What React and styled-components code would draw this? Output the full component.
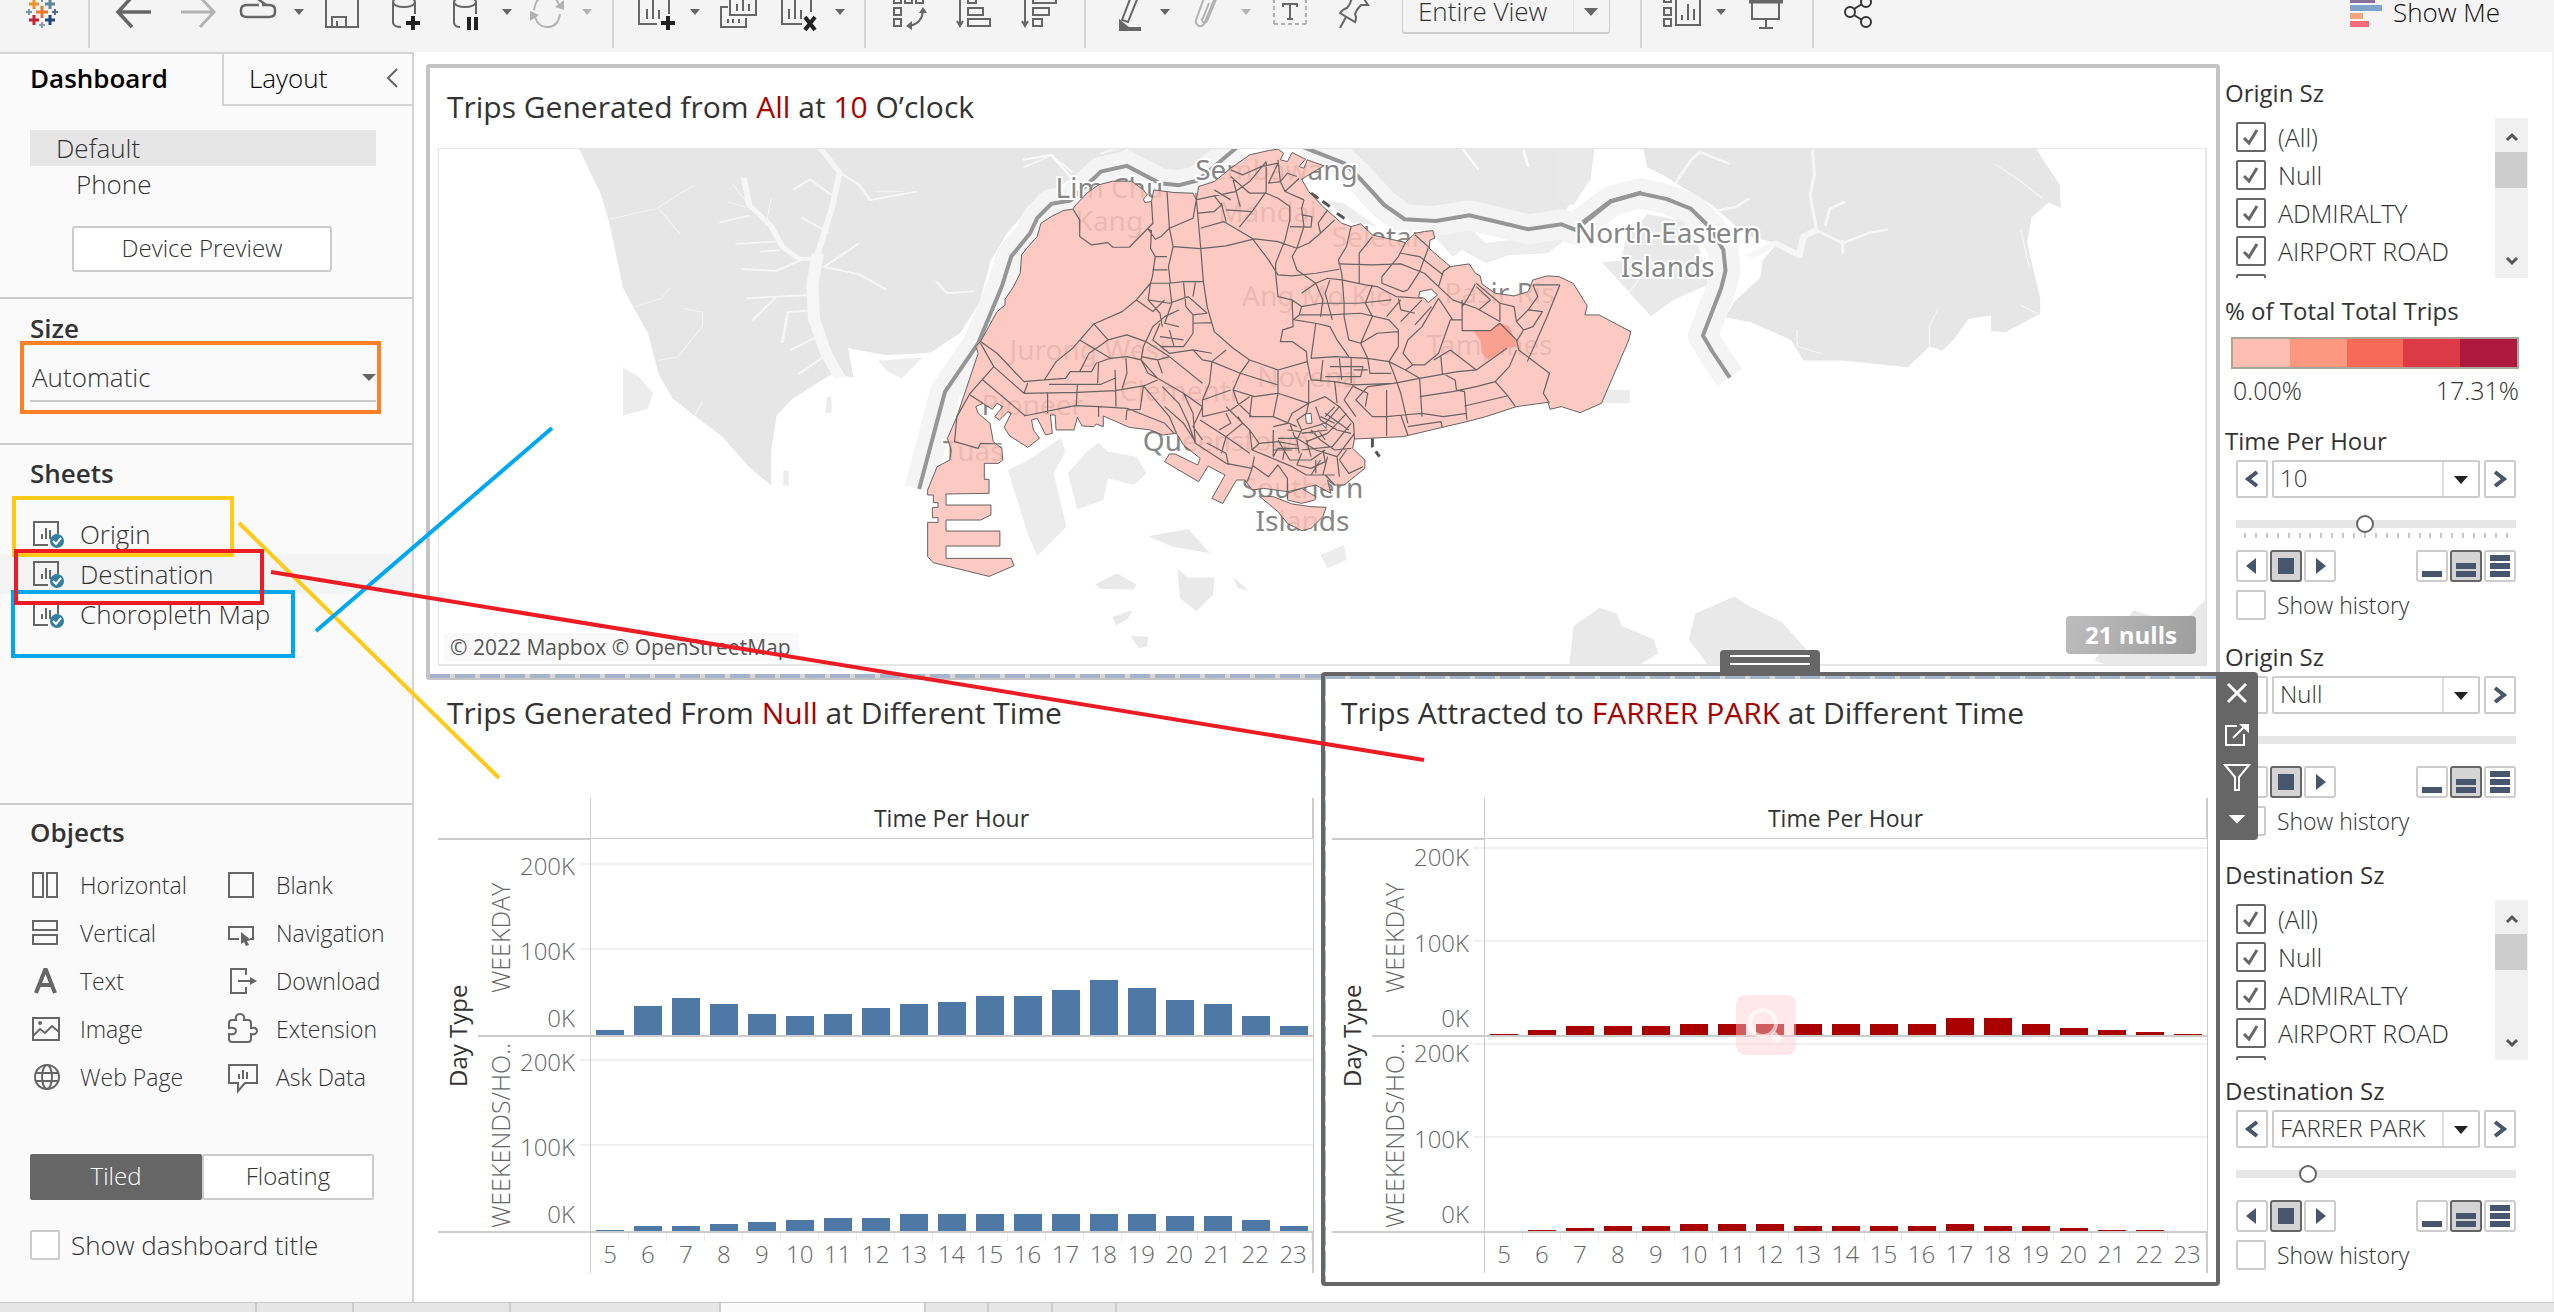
import React, { useState } from 'react';
import styled, { createGlobalStyle, css } from 'styled-components';

const FONT = '"Open Sans", "Noto Sans", sans-serif';
const LINE = '#cccccc';
const INK = '#333333';
const ICON = '#666666';

const Global = createGlobalStyle`
  *, *::before, *::after { box-sizing: border-box; }
  body { margin: 0; background: #fff; color: ${INK}; font: 300 24px/30px ${FONT}; }
  button, select, input { font: inherit; color: inherit; margin: 0; padding: 0; }
  button { cursor: pointer; background: none; border: 0; }
  h2, h3, p, ul { margin: 0; padding: 0; font-weight: inherit; font-size: inherit; }
  ul { list-style: none; }
`;

const Page = styled.div`
  position: relative;
  display: flex;
  flex-direction: column;
  min-height: 100vh;
  background: #f4f4f4;
  overflow: hidden;
`;

/* ---------- toolbar ---------- */

const Toolbar = styled.header`
  height: 52px;
  overflow: hidden;
`;

const ToolRow = styled.div`
  display: flex;
  align-items: center;
  height: 80px;
  margin-top: -28px;
  padding-right: 54px;
`;

const Tool = styled.button`
  display: flex;
  justify-content: center;
  align-items: center;
  flex: none;
  width: ${(p) => p.$w || 64}px;
  height: 56px;
  color: ${(p) => (p.$dim ? '#b3b3b3' : ICON)};
  svg { flex: none; width: 40px; height: 40px; overflow: visible; fill: none; stroke: currentColor; stroke-width: 2; }
`;

const CaretTool = styled(Tool)`
  &::after {
    content: '';
    border: 5px solid transparent;
    border-top: 6px solid currentColor;
    border-bottom: 0;
  }
`;

const Divider = styled.span`
  flex: none;
  width: 2px;
  height: 76px;
  margin: 0 12px;
  align-self: flex-start;
  background: #d4d4d4;
`;

const LogoBox = styled.div`
  display: flex;
  justify-content: center;
  flex: none;
  width: 76px;
  padding-left: 8px;
  svg { width: 40px; height: 40px; overflow: visible; }
`;

const FitBox = styled.span`
  position: relative;
  flex: none;
  width: 208px;
  margin: 0 18px 0 20px;
  select {
    appearance: none;
    width: 100%;
    height: 44px;
    padding: 0 0 2px 15px;
    font-size: 26px;
    line-height: 24px;
    border: 1px solid ${LINE};
    border-bottom-width: 2px;
    border-radius: 3px;
    background: #f4f4f4;
  }
  &::before {
    content: '';
    position: absolute;
    right: 36px;
    top: 1px;
    bottom: 2px;
    border-left: 1px solid #e0e0e0;
  }
  &::after {
    content: '';
    position: absolute;
    right: 12px;
    top: 18px;
    border: 7px solid transparent;
    border-top: 8px solid ${ICON};
    border-bottom: 0;
  }
`;

const ShowMe = styled.button`
  display: flex;
  align-items: center;
  gap: 11px;
  margin-left: auto;
  font-size: 26px;
  line-height: 24px;
  color: #111;
  svg { width: 32px; height: 40px; }
`;

/* ---------- side panel ---------- */

const Body = styled.div`
  display: flex;
  flex: 1;
`;

const Side = styled.aside`
  display: flex;
  flex-direction: column;
  flex: none;
  width: 414px;
  background: #fafafa;
  border-top: 2px solid #d4d4d4;
  border-right: 2px solid #d4d4d4;
`;

const Tabs = styled.div`
  display: flex;
  height: 52px;
  color: #000;
`;

const Tab = styled.button`
  text-align: left;
  padding: 0 0 4px 30px;
  width: 222px;
  font-size: 26px;
  font-weight: 600;
  ${(p) => p.$off && css`
    display: flex;
    justify-content: space-between;
    align-items: center;
    flex: 1;
    padding: 0 14px 2px 25px;
    font-weight: 300;
    border-left: 2px solid #d4d4d4;
    border-bottom: 2px solid #d4d4d4;
  `}
`;

const Section = styled.section`
  padding: ${(p) => p.$top || 12}px 36px ${(p) => p.$bottom || 0}px 30px;
  border-bottom: ${(p) => (p.$last ? 0 : 2)}px solid ${LINE};
  ${(p) => p.$grow && 'flex: 1;'}
`;

const Heading = styled.h2`
  height: 36px;
  line-height: 32px;
  font-size: 26px;
  font-weight: 600;
`;

const Device = styled.li`
  height: 36px;
  line-height: 36px;
  font-size: 26px;
  padding-left: ${(p) => (p.$on ? 26 : 46)}px;
  background: ${(p) => (p.$on ? '#e6e6e6' : 'transparent')};
`;

const Preview = styled.button`
  display: block;
  width: 260px;
  height: 46px;
  margin: 24px 0 0 42px;
  padding-bottom: 2px;
  background: #fff;
  border: 2px solid ${LINE};
  border-radius: 3px;
`;

const SizeBox = styled.div`
  position: relative;
  margin-top: 6px;
  select {
    appearance: none;
    width: 100%;
    height: 48px;
    padding-left: 2px;
    font-size: 26px;
    background: none;
    border: 0;
    border-bottom: 2px solid ${LINE};
  }
  &::after {
    content: '';
    position: absolute;
    right: 0;
    top: 20px;
    border: 7px solid transparent;
    border-top: 7px solid ${ICON};
    border-bottom: 0;
  }
`;

const SheetList = styled.ul`
  margin: 21px -36px 0 -30px;
`;

const Sheet = styled.li`
  display: flex;
  align-items: center;
  gap: 14px;
  height: 40px;
  padding-left: 32px;
  font-size: 26px;
  background: ${(p) => (p.$hover ? '#f4f4f4' : 'transparent')};
  svg { width: 34px; height: 28px; }
`;

const ObjectGrid = styled.div`
  display: grid;
  grid-template-columns: 196px 1fr;
  grid-auto-rows: 48px;
  margin: 9px -36px 53px 0;
`;

const ObjectItem = styled.button`
  display: flex;
  align-items: center;
  gap: 16px;
  text-align: left;
  font-size: 23px;
  svg { flex: none; width: 34px; height: 34px; fill: none; stroke: ${ICON}; stroke-width: 2; overflow: visible; }
`;

const Toggle = styled.div`
  display: grid;
  grid-template-columns: 1fr 1fr;
  width: 344px;
  height: 46px;
  margin-bottom: 30px;
`;

const ToggleItem = styled.button`
  padding-bottom: 2px;
  border: 2px solid ${(p) => (p.$on ? ICON : LINE)};
  border-radius: 2px;
  background: ${(p) => (p.$on ? ICON : '#fff')};
  color: ${(p) => (p.$on ? '#fff' : INK)};
`;

const CheckLabel = styled.label`
  display: flex;
  align-items: center;
  gap: ${(p) => p.$gap || 12}px;
  font-size: ${(p) => p.$size || 24}px;
  height: 30px;
  flex: none;
`;

const tickMark = `url("data:image/svg+xml,%3Csvg xmlns='http://www.w3.org/2000/svg' viewBox='0 0 26 26'%3E%3Cpath d='M6 14l5 5 8-13' fill='none' stroke='%23666' stroke-width='3'/%3E%3C/svg%3E")`;

const Check = styled.input.attrs({ type: 'checkbox' })`
  appearance: none;
  flex: none;
  width: 30px;
  height: 30px;
  border: 2px solid ${LINE};
  border-radius: 2px;
  background: #fff;
  &:checked { border-color: ${ICON}; background-image: ${tickMark}; }
`;

/* ---------- dashboard canvas ---------- */

const Canvas = styled.main`
  display: flex;
  flex: 1;
  min-width: 0;
  margin-right: 2px;
  padding: 12px 0 15px 12px;
  background: #fff;
`;

const Views = styled.div`
  flex: 1;
  min-width: 0;
`;

const MapCard = styled.section`
  border: 4px solid #c4c4c4;
  border-bottom-width: 2px;
  border-radius: 3px;
  padding: 20px 9px 0 8px;
`;

const ViewTitle = styled.h3`
  height: 40px;
  padding-left: 9px;
  line-height: 38px;
  font-size: 30px;
  font-weight: 500;
  white-space: nowrap;
  em { font-style: normal; color: #a90000; }
`;

const MapBox = styled.div`
  position: relative;
  height: 518px;
  margin-top: 20px;
  border: 1px solid #e6e6e6;
  border-width: 1px 2px 2px 1px;
  > svg { display: block; width: 100%; height: 100%; }
`;

const Credit = styled.small`
  position: absolute;
  left: 5px;
  bottom: 3px;
  padding: 0 8px 0 6px;
  font-size: 21px;
  font-weight: 400;
  line-height: 28px;
  color: #555;
  background: rgba(248, 248, 248, 0.8);
`;

const Nulls = styled.button`
  position: absolute;
  right: 9px;
  bottom: 10px;
  width: 130px;
  height: 38px;
  border-radius: 4px;
  font-weight: 700;
  color: #fff;
  background: linear-gradient(110deg, #bdbdbd, #9d9d9d);
`;

const dashes = 'repeating-linear-gradient(90deg, #a5b3cc 0 20px, #d8d8d0 20px 25px)';

const DropEdge = styled.div`
  height: 4px;
  margin: 8px -9px 0 -8px;
  background: ${dashes};
`;

const ChartRow = styled.div`
  display: grid;
  grid-template-columns: 1fr 1fr;
`;

const ChartCard = styled.section`
  padding: 14px 9px 0 12px;
  ${(p) => p.$selected && css`
    position: relative;
    margin: -8px 0 0 -2px;
    padding: 18px 8px 9px 7px;
    border: 4px solid ${ICON};
    border-radius: 4px;
    background: #fff;
    &::before {
      content: '';
      position: absolute;
      inset: 0 0 auto 0;
      height: 3px;
      background: ${dashes};
    }
    &::after {
      content: '';
      position: absolute;
      inset: 0 auto 0 0;
      width: 1px;
      background: repeating-linear-gradient(#a5b3cc 0 20px, #e6e6e0 20px 25px);
    }
  `}
`;

const Plot = styled.div`
  display: grid;
  grid-template-columns: 40px 44px 68px 1fr;
  grid-template-rows: 40px 199px 196px 40px;
  margin-top: 64px;
  color: #666;
`;

const ColumnHead = styled.div`
  grid-column: 4;
  grid-row: 1;
  display: flex;
  justify-content: center;
  align-items: center;
  font-size: 23px;
  font-weight: 500;
  color: ${INK};
  border: solid ${LINE};
  border-width: 0 2px 0 1px;
`;

const Vertical = styled.div`
  display: flex;
  align-items: center;
  justify-content: center;
  writing-mode: vertical-rl;
  transform: rotate(180deg);
  white-space: nowrap;
`;

const FieldName = styled(Vertical)`
  grid-column: 1;
  grid-row: 2 / 4;
  font-size: 24px;
  font-weight: 500;
  line-height: 40px;
  color: ${INK};
  border-bottom: 2px solid ${LINE};
  border-top: 2px solid ${LINE};
`;

const RowName = styled(Vertical)`
  grid-column: 2;
  font-size: 25px;
  border-bottom: 2px solid ${(p) => (p.$first ? LINE : 'transparent')};
  border-top: 2px solid ${LINE};
`;

const Axis = styled.div`
  position: relative;
  grid-column: 3;
  border-bottom: 2px solid ${LINE};
  border-top: ${(p) => (p.$first ? 2 : 0)}px solid ${LINE};
`;

const AxisLabel = styled.span`
  position: absolute;
  right: 15px;
  line-height: 30px;
`;

const AxisTick = styled.i`
  position: absolute;
  right: 0;
  width: 10px;
  height: 2px;
  background: #f0f0f0;
`;

const Pane = styled.div`
  position: relative;
  display: flex;
  align-items: flex-end;
  grid-column: 4;
  border: 1px solid ${LINE};
  border-bottom-width: 2px;
  border-top-width: ${(p) => (p.$first ? 1 : 0)}px;
`;

const GridLine = styled.i`
  position: absolute;
  left: 0;
  right: 0;
  height: 2px;
  background: #f0f0f0;
`;

const Slot = styled.span`
  position: relative;
  display: flex;
  justify-content: center;
  flex: 1 1 0;
`;

const Bar = styled.span`
  width: 74%;
  background: ${(p) => p.$color};
`;

const Hours = styled.div`
  display: flex;
  grid-column: 4;
  grid-row: 4;
  border: solid ${LINE};
  border-width: 0 2px 0 1px;
`;

const Hour = styled.span`
  flex: 1 1 0;
  text-align: center;
  line-height: 42px;
  background: linear-gradient(#eee, #eee) right top / 1px 8px no-repeat;
`;

const Handle = styled.button`
  position: absolute;
  left: calc(50% - 51px);
  top: -26px;
  width: 100px;
  height: 24px;
  border-radius: 4px 4px 0 0;
  background: linear-gradient(#fff, #fff) center 5px / 80px 2px no-repeat,
    linear-gradient(#fff, #fff) center 13px / 80px 2px no-repeat, ${ICON};
`;

const CardTools = styled.div`
  position: absolute;
  z-index: 2;
  left: 100%;
  top: -4px;
  display: flex;
  flex-direction: column;
  width: 42px;
  height: 168px;
  border-radius: 0 4px 4px 0;
  background: ${ICON};
  button { height: 42px; }
  svg { width: 28px; height: 28px; fill: none; stroke: #fff; stroke-width: 2; display: block; margin: auto; }
`;

const Lens = styled.div`
  position: absolute;
  z-index: 1;
  left: calc(50% - 35px);
  top: 319px;
  width: 60px;
  height: 60px;
  border-radius: 9px;
  background: rgba(252, 205, 210, 0.45);
  svg { width: 60px; height: 60px; fill: none; stroke: rgba(255, 255, 255, 0.6); stroke-width: 4; }
`;

/* ---------- filter column ---------- */

const Filters = styled.aside`
  flex: none;
  width: 332px;
  padding: 14px 24px 0 5px;
`;

const FilterBlock = styled.section`
  margin-bottom: ${(p) => p.$after}px;
`;

const FilterTitle = styled.h3`
  height: 32px;
  line-height: 30px;
  font-size: 24px;
  font-weight: 500;
`;

const ListBox = styled.div`
  display: flex;
  height: 160px;
  margin: 8px 0 0 11px;
  overflow: hidden;
`;

const Options = styled.div`
  flex: 1;
  padding-top: 4px;
  label { margin-bottom: 8px; }
`;

const ScrollTrack = styled.div`
  display: flex;
  flex-direction: column;
  justify-content: space-between;
  align-items: center;
  width: 33px;
  padding: 10px 0 8px;
  background: linear-gradient(#cdcdcd, #cdcdcd) left 34px / 32px 36px no-repeat, #f0f0f0;
  svg { width: 14px; height: 18px; fill: none; stroke: #555; stroke-width: 3; }
`;

const Ramp = styled.div`
  display: grid;
  grid-template-columns: repeat(5, 1fr);
  height: 32px;
  margin: 9px 9px 6px 6px;
  border: 2px solid #aba798;
`;

const Swatch = styled.span`
  background: ${(p) => p.$color};
`;

const RampEnds = styled.div`
  display: flex;
  justify-content: space-between;
  margin: 0 9px 0 8px;
  font-size: 25px;
`;

const Control = styled.div`
  width: 280px;
  margin: 2px 0 0 11px;
`;

const Stepper = styled.div`
  display: flex;
  gap: 4px;
  height: 38px;
`;

const StepButton = styled.button`
  width: 32px;
  flex: none;
  border: 2px solid ${LINE};
  border-radius: 2px;
  background: #fff;
  svg { display: block; margin: auto; width: 16px; height: 20px; fill: none; stroke: #47566c; stroke-width: 4; }
`;

const Picker = styled.span`
  position: relative;
  flex: 1;
  select {
    appearance: none;
    width: 100%;
    height: 38px;
    padding: 0 0 2px 6px;
    border: 2px solid ${LINE};
    border-radius: 2px;
    background: linear-gradient(#e0e0e0, #e0e0e0) right 34px top 0 / 2px 100% no-repeat, #fff;
  }
  &::after {
    content: '';
    position: absolute;
    right: 12px;
    top: 16px;
    border: 7px solid transparent;
    border-top: 8px solid #222;
    border-bottom: 0;
  }
`;

const Range = styled.input.attrs({ type: 'range' })`
  appearance: none;
  display: block;
  width: 100%;
  height: 18px;
  margin: 17px 0 0;
  background: linear-gradient(#e6e6e6, #e6e6e6) center / 100% 8px no-repeat;
  &::-webkit-slider-thumb {
    appearance: none;
    width: 18px;
    height: 18px;
    border: 2px solid ${ICON};
    border-radius: 50%;
    background: #fff;
  }
`;

const Ticks = styled.div`
  display: flex;
  justify-content: space-between;
  height: 17px;
  padding: 0 8px;
  i { width: 2px; height: 5px; background: ${(p) => (p.$on ? '#c8c8c8' : 'transparent')}; }
`;

const PlayRow = styled.div`
  display: flex;
  gap: 2px;
  height: 32px;
  margin-bottom: 8px;
`;

const PlayButton = styled.button`
  width: 32px;
  border: 2px solid ${(p) => (p.$on ? ICON : LINE)};
  border-radius: 3px;
  background: ${(p) => (p.$on ? '#d4d4d4' : '#fff')};
  ${(p) => p.$push && 'margin-left: auto;'}
  svg { display: block; width: 28px; height: 28px; fill: #47566c; }
`;

/* ---------- sheet tabs and callouts ---------- */

const SheetTabs = styled.nav`
  display: flex;
  height: 10px;
  overflow: hidden;
  background: #e6e6e6;
  border-top: 1px solid #c8c8c8;
`;

const SheetTab = styled.button`
  flex: none;
  width: ${(p) => p.$w}px;
  border-right: 2px solid ${LINE};
  background: ${(p) => (p.$on ? '#fafafa' : 'transparent')};
`;

const Callouts = styled.svg`
  position: absolute;
  z-index: 5;
  left: 0;
  top: 0;
  width: 1440px;
  height: 800px;
  pointer-events: none;
  fill: none;
  stroke-width: 4;
`;

/* ---------- drawings ---------- */

const Plus = ({ x, y, r, c, w = 3 }) => (
  <path d={`M${x - r} ${y}h${2 * r}M${x} ${y - r}v${2 * r}`} stroke={c} strokeWidth={w} />
);

const Logo = () => (
  <svg viewBox="0 0 40 40">
    <Plus x={20} y={20} r={6} c="#e8762d" />
    <Plus x={12} y={12} r={5} c="#eb912c" />
    <Plus x={28} y={12} r={5} c="#5b879b" />
    <Plus x={12} y={28} r={5} c="#c72035" />
    <Plus x={28} y={28} r={5} c="#1f447e" />
    <Plus x={7} y={20} r={3} c="#7099a6" w={2} />
    <Plus x={33} y={20} r={3} c="#59669c" w={2} />
    <Plus x={20} y={33} r={3} c="#8a9ab8" w={2} />
    <Plus x={20} y={7} r={3} c="#7099a6" w={2} />
  </svg>
);

const toolArt = {
  back: <path d="M37 20H5M18 5L4 20l14 15" strokeWidth="3.5" />,
  forward: <path d="M3 20h32M22 5l14 15-14 15" strokeWidth="3" />,
  replay: <path d="M24 13h7q6 0 6 5v2q0 5-6 5H9q-6 0-6-5v-2q0-5 6-5h12M20 7l8 6" strokeWidth="2.5" />,
  save: <path d="M4 4h32v31H4zM10 35V25h14v10M15 35v-6" />,
  data: <><ellipse cx="18" cy="10" rx="11" ry="5" /><path d="M7 10v21q1 4 8 4M29 10v12" /><path d="M20 31h14M27 24v14" stroke="#222" strokeWidth="4" /></>,
  pause: <><ellipse cx="18" cy="10" rx="11" ry="5" /><path d="M7 10v21q1 4 6 4M29 10v12" /><path d="M22 25v13M29 25v13" stroke="#222" strokeWidth="4" /></>,
  refresh: <><path d="M7 18Q9 4 20 3q9 0 12 10M33 22q-2 13-13 13-9 0-12-10" /><path d="M37 8v10l-9-3zM3 29V19l9 4z" fill="currentColor" stroke="none" /></>,
  sheet: <><path d="M36 22V2H6v30h18" /><path d="M14 27V17M20 27V8M26 27v-9" /><path d="M28 31h14M35 24v14" stroke="#222" strokeWidth="4" /></>,
  dupe: <><path d="M12 2h26v21H12zM19 19v-7M25 19V8M31 19v-7" /><path d="M10 15H3v20h25v-9M10 31v-4M15 31v-4M21 31v-4" /></>,
  clear: <><path d="M34 20V2H5v30h20" /><path d="M12 27V17M18 27V8M24 27v-9" /><path d="M28 25l10 13M38 25L28 38" stroke="#222" strokeWidth="4" /></>,
  swap: <><path d="M4 16h7v7H4zM4 27h7v7H4zM4 3h7v8H4zM15 3h7v8h-7zM26 3h7v8h-7z" /><path d="M20 34q12-3 13-15" /><path d="M22 29l-6 5 6 4zM29 21l4-6 4 6z" fill="currentColor" stroke="none" /></>,
  asc: <path d="M6 2v30M3 29l3 5 3-5M14 4h8v7h-8zM14 16h15v7H14zM14 27h22v7H14z" />,
  desc: <path d="M6 2v30M3 29l3 5 3-5M14 4h23v7H14zM14 16h16v7H14zM14 27h9v7h-9z" />,
  pen: <><path d="M16 28l10-26 6 3-10 25z" /><path d="M14 29l6 5h-6z" fill="currentColor" /><path d="M13 37h22" strokeWidth="4" /></>,
  clip: <path d="M28 8l-9 22q-2 5-6 4-4-2-3-6L18 6q3-6 8-4 5 2 3 8l-8 19q-2 3-4 1t0-4l6-15" />,
  label: <><path d="M4 32V3M36 32V3M4 32h32" strokeDasharray="4 3" /><path d="M13 15v-3h14v3M20 12v15M17 27h6" stroke="#666" /></>,
  pin: <path d="M17 0l2 6q-2 7-5 10-4 1-7 5l15 9q2-4 0-8 2-5 6-9l7 0L28 2M13 25l-6 11" />,
  cards: <path d="M2 3h7v7H2zM2 16h7v7H2zM2 27h7v7H2zM14 2h24v31H14zM20 28v-5M26 28V12M32 28V17" />,
  present: <><path d="M3 9h34" strokeWidth="5" /><path d="M6 11v16h27V11M20 27v9M13 36h14" /></>,
  share: <g stroke="#333"><circle cx="12" cy="20" r="5" /><circle cx="28" cy="10" r="5" /><circle cx="28" cy="30" r="5" /><path d="M16 17l8-5M16 23l8 5" /></g>,
};

const ToolIcon = ({ name, w, dim }) => (
  <Tool $w={w} $dim={dim} aria-label={name}><svg viewBox="0 0 40 40">{toolArt[name]}</svg></Tool>
);

const objectArt = {
  Horizontal: <path d="M3 5h10v24H3zM17 5h10v24H17z" />,
  Blank: <path d="M3 5h24v24H3z" />,
  Vertical: <path d="M3 5h24v9H3zM3 19h24v9H3z" />,
  Navigation: <><path d="M13 23H3V11h24v12h-3" /><path d="M15 16l10 8-4 1 2 4-3 1-2-4-3 2z" fill={ICON} stroke="none" /></>,
  Text: <path d="M6 29L15 6h1l9 23M9 21h13" strokeWidth="4" />,
  Download: <><path d="M20 11V5H5v24h15v-6M12 17h14" /><path d="M24 13l7 4-7 4z" fill={ICON} stroke="none" /></>,
  Image: <><path d="M3 6h26v22H3zM3 24l7-7 5 4 7-7 7 6" /><circle cx="10" cy="11" r="1" /></>,
  Extension: <path d="M3 11q0-3 3-3h4q-1-6 4-6t4 6h4q3 0 3 3v5q6-1 6 3t-6 3v5q0 3-3 3H6q-3 0-3-3v-5q7 1 7-3t-7-3z" />,
  'Web Page': <><circle cx="17" cy="17" r="12" /><ellipse cx="17" cy="17" rx="5" ry="12" /><path d="M6 13h22M6 21h22" /></>,
  'Ask Data': <path d="M3 5h28v18H19l-7 8v-8H3zM13 19v-5M17 19v-9M21 19v-7" />,
};

const SheetIcon = () => (
  <svg viewBox="0 0 34 28" fill="none" stroke={ICON} strokeWidth="2">
    <path d="M26 14V2H2v23h14M10 19v-5M14 19V8M18 19v-9" />
    <circle cx="25" cy="21" r="7" fill="#31809f" stroke="none" />
    <path d="M21 21l3 3 5-6" stroke="#fff" />
  </svg>
);

/* ---------- map ---------- */

const mainland = 'M170 605L205 515 222 495 222 478 240 440 254 400 257 345 268 325 290 290 298 250 320 230 345 212 365 208 372 195 395 160 420 135 450 124 490 124 515 150 523 165 515 178 518 188 532 185 537 150 580 158 620 160 627 180 632 140 665 125 700 85 740 45 780 32 800 28 812 40 805 60 820 65 830 38 858 58 845 80 855 85 862 60 897 78 850 118 865 155 895 200 935 250 955 260 975 252 1000 285 1030 295 1070 308 1090 280 1110 275 1128 272 1132 295 1122 300 1120 325 1165 380 1205 372 1218 400 1228 408 1232 432 1260 460 1300 468 1330 455 1340 420 1370 408 1395 410 1425 430 1455 498 1450 525 1480 525 1547 575 1543 600 1485 790 1440 818 1400 800 1376 808 1372 787 1305 800 1240 830 1200 845 1148 862 1065 890 962 897 958 925 984 960 984 985 940 1035 918 1035 905 1020 912 1060 880 1035 820 1055 770 1045 745 1050 730 1020 712 1020 683 1090 660 1075 688 1005 652 978 632 1025 560 965 570 942 582 942 630 975 635 955 600 915 585 880 555 885 530 870 485 862 430 828 430 860 415 852 410 860 385 858 375 832 368 870 330 870 328 825 318 825 322 880 308 885 290 835 278 840 282 870 295 895 270 922 232 888 220 862 235 820 228 815 210 840 200 830 217 800 205 790 195 808 175 790 160 800 165 820 190 850 197 905 215 925 217 960 208 970 178 970 178 1018 188 1018 188 1060 97 1062 97 1095 192 1095 192 1125 170 1140 97 1140 97 1173 211 1173 211 1218 97 1218 97 1255 235 1255 241 1277 188 1309 70 1268 58 1250 58 1147 80 1147 80 1133 68 1133 68 1102 80 1102 80 1088 70 1088 70 1065 58 1065 58 1050 78 980 105 960 108 930 100 895 120 830 165 640 160 620ZM760 1068L790 1070 830 1092 870 1100 902 1102 895 1130 870 1165 850 1172 820 1150 800 1115ZM820 1060L850 1045 880 1070 878 1080 850 1090 820 1080Z';

const zones = 'M366 208L380 240 380 290 405 315 440 308 450 322 485 322 535 250 532 185M524 268L532 272 530 325 540 350 534 410 530 430 500 480 470 515 410 552 365 625 330 665 305 720 262 725 205 640 170 605M524 265L540 298 552 290 570 265 620 235 627 180M565 155L570 265 578 320 568 380 572 430M530 430L570 430 600 425 642 425M626 160L636 320 642 425 650 500 665 575 705 625 740 660 760 670 800 690 862 665 860 635 830 605 805 605 810 570 832 560 830 480 800 470 795 400M636 265L685 245 745 295 780 360 800 405 830 408 880 400 930 388M578 320L635 326 690 318 750 297 800 305 840 325 865 310M540 350H565M534 390H566M626 180L665 168 710 155 740 125 775 65M630 220L665 215 680 195 665 168M680 190L690 245M690 210L745 215 775 155M745 215L718 262M700 90L725 105 765 80 800 70M700 110L740 160 775 160 800 175 825 200M705 120L720 200M665 150L700 180M775 65V155M800 70L780 130 805 125 820 100 840 110M800 60L805 125 815 155 855 180M815 155L845 115M825 200L825 240 815 300 795 370 795 400M855 180L850 205 855 260 840 325 830 350 840 390 880 430M825 260L870 262 872 230 850 225M865 310L890 280 885 250 905 210M890 280L920 240M955 258L945 320 928 360 935 400 940 490M1000 290L972 340 972 430M1070 308L1055 350 1020 410 1020 430M928 372L1000 375 1060 372 1110 400 1140 440M1090 285L1122 325M1060 340L1100 350 1150 405M1118 325L1100 395 1075 450M1165 380L1150 395 1140 440 1170 480 1220 505 1270 545M880 430L905 415 935 420 985 435 1010 440 1050 470 1105 475M880 430L895 480 890 530M910 420L900 460 915 540M850 500L890 490 970 490 1040 480M845 525L910 525 975 520 1035 540 1055 570M830 480L850 500 845 525 832 540M850 460L880 430M835 540L880 550 910 560 925 600 950 650M880 550L870 655M940 490L940 530 950 600 975 610 1010 580 1055 575M1020 430L1065 455 1075 450M1055 570L1055 620 1035 665M1140 475L1105 560 1075 600 1065 640 1085 675 1110 675 1140 640 1165 540 1190 540M1140 475L1170 540M1190 480L1190 572 1250 572 1270 550M1060 480L1030 530M1105 480L1060 545M1125 500L1090 555M1000 435L985 490 1000 530 975 610 990 655M1055 475L1060 510 1090 520M1270 550L1305 600 1310 630 1375 700 1362 760 1375 790M1305 630L1290 680 1260 725 1220 740 1170 755 1100 770M1285 625L1220 690 1180 695 1100 715 1045 730M1165 630L1220 690M1145 650L1148 700 1175 720 1178 750 1195 755 1200 840M1165 630L1130 660M1260 725L1285 765 1303 800M1195 798L1285 768M1397 435L1370 530 1328 665M1340 435H1397M1340 435L1350 470 1330 510 1305 545M1270 490L1300 500 1305 545 1320 570 1305 605M1330 510L1360 515 1340 560 1320 570M1218 432L1200 480 1190 500M1220 430L1270 490 1270 545M1220 440L1250 480 1225 510M870 655L920 650 990 655 1035 665 1070 690 1085 675M862 665L870 720 920 725 960 735 1045 730M1035 665L1045 700 1060 760 1075 850M990 655L995 700 1040 700M1070 690L1100 715 1105 830M1105 820L1150 830 1200 820M1045 730L990 740 965 780 1000 830 1030 830 1065 825 1105 820M1030 750V888M1060 825L1075 885M1075 860L1145 845 1148 862M380 600L445 655M410 552L440 600 480 585 520 605 570 650M440 600L400 640 380 695M305 720L350 715 360 695 405 695 415 670 445 655 480 650 510 660 545 715 600 760 640 800M315 733H425L455 715M270 730L262 760 375 757 455 752 515 738 545 720M375 735L373 795M312 757V820M262 828L370 797 420 800 480 805 560 850 580 880M198 680L148 760 120 830 115 905 165 925 170 910 215 912M175 720L265 828M170 610L198 680 262 760M148 765L175 790M455 690L457 800M478 655L480 700 470 745M515 738L508 808 480 810 478 840M420 800V830M420 670L418 730M530 430L525 480 550 520 555 560M500 480L535 515 560 480M525 480L570 490 610 470 650 520M570 430L575 490 560 550 590 560M600 428L605 500 620 525M625 428L620 470M590 510L560 530 535 560M650 520L620 525 620 580 600 620 550 620M535 560L515 620 510 660 525 700 545 715M550 550L535 600 570 640 620 630 660 640M620 550L660 548M510 650L545 660 555 700M550 590L600 600M570 570L580 620M620 630L640 660 660 665 720 700 800 735M690 630L660 665 655 730 640 780 640 830M570 650L640 730M545 660L570 650M720 700L705 750 750 770 800 760 865 790M740 660L720 700M640 780L700 750M640 830L700 810 740 770M690 800L740 870 745 930M705 750L715 790 745 830M555 740L590 790 610 850 625 910M560 800L600 850 625 905M515 738L570 830 585 880M640 800L620 860 640 900M635 840L690 890 740 940M600 760L620 820 625 910M625 910L690 970 745 985 735 1025M650 910L690 940 695 975M690 890L680 940M745 930L780 950 830 980 860 1005 920 1005M745 985L750 950M745 975L780 1010 800 975 820 1015 820 1055M800 690L800 760 790 830M745 770L740 830 790 830 840 860M740 870L760 910 745 930M760 910L800 905 840 915M790 870L790 950M690 890L725 850 715 830M675 870L700 850 690 820M865 790L830 820 820 850 790 860M865 720L865 790 900 770 930 800 960 850 962 897M920 725L925 790M960 735L940 780 965 830M895 660L890 725M910 680H980L975 710H900M930 655L935 720M955 655V730M990 690H960M960 740L990 760 985 800M865 790L860 820 840 840 850 870 840 900 845 940M930 800L900 850 850 870M945 820L905 880 860 905M955 850L915 920 850 930M962 880L925 950 930 1010M880 800L890 840 925 870 955 880M870 870L890 900 920 930 955 925M825 850L835 890 880 930 925 950M800 900L825 960 870 960 900 930M840 895H800M815 920L810 960M850 940L840 975 870 985 900 965 895 930M880 960V1000M905 950L895 1005M930 960L950 1000 980 980M945 930L930 960M790 950L800 925 845 925M900 1005L920 1035M850 880L905 870M860 900L870 950M885 870L900 900M870 1005L890 960M790 930H830M820 870L880 880M900 820L950 870M920 800L900 830M890 830L920 850';

const labels = [
  [1109, 198, 'Lim Chu'], [1109, 231, 'Kang'], [1276, 180, 'Sembawang'], [1267, 222, 'Mandai'],
  [1377, 247, 'Seletar'], [1317, 306, 'Ang Mo Kio'], [1499, 303, 'Pasir Ris'], [1089, 360, 'Jurong West'],
  [1489, 355, 'Tampines'], [1307, 387, 'Novena'], [1178, 401, 'Clementi'], [1032, 415, 'Pioneer'],
  [973, 461, 'Tuas'], [1226, 451, 'Queenstown'], [1302, 498, 'Southern'], [1302, 531, 'Islands'],
  [1667, 243, 'North-Eastern'], [1667, 277, 'Islands'],
];

const WEST = 'translate(420 140) scale(.5485 .3444)';
const CENTRE = 'translate(900 140) scale(.4719 .3333)';
const EAST = 'translate(1560 140) scale(.4337 .3444)';

const border = 'M40 1047L92 770 95 755 165 610 215 440 235 350 275 280 290 235 320 192 360 182 425 95 480 78 550 130 590 136 630 122 715 20M850 20L940 70 970 110 1025 195 1068 238 1135 243 1205 226 1270 248 1330 268 1400 253 1430 270 1505 185 1570 158';
const borderEast = 'M50 240L115 178 182 155 245 172 300 200 345 255 375 320 380 380 370 430 328 568 350 615 390 690';

const MapArt = () => (
  <svg viewBox="439 149 1765 515" preserveAspectRatio="xMidYMid slice">
    <g transform={WEST} fill="#e6e6e6">
      <path d="M290 25L300 60 330 160 345 240 370 430 390 490 415 560 435 680 460 750 500 800 550 860 600 950 640 1003 640 900 650 800 680 750 750 680 790 690 780 605 850 625 930 618 985 560 1020 470 1040 350 1070 270 1120 180 1190 110 1290 25Z" />
      <path d="M370 660L400 690 425 735 415 780 370 800ZM835 640L915 632 878 692 850 670ZM742 745H750V792H738ZM662 960H672V1003H662Z" fill="#ececec" />
      <g stroke="#f6f6f6" fill="none" strokeLinejoin="round">
        <path d="M725 330L715 420 718 520 740 620 765 690" strokeWidth="22" />
        <path d="M730 25L765 95 750 200 725 330M590 110L600 190 640 250 660 310 690 345 720 345" strokeWidth="11" />
        <path d="M765 95L800 130 820 175 905 150M750 160L710 115 680 145M745 270L695 225M735 370L800 300M740 370L800 390 850 435M700 345L650 380 585 375M655 320L620 325M650 295L575 302M600 220L545 240M715 450L650 455 595 460M650 455L605 525M715 495L670 500 660 590M725 570L675 610M735 630L690 680M940 410L960 445 1010 440M1100 80L1150 45 1190 95M1240 40L1270 25" strokeWidth="5" />
        <path d="M570 130L600 190M560 180L605 200M640 170L630 250M345 230L430 200 500 130M435 200L475 275M390 485L440 460 455 430M435 640L470 630 515 540 515 500 480 490M500 800L515 760M830 150L880 150" strokeWidth="2" />
      </g>
      <path d="M1327 1150L1360 1140 1400 1130 1440 1200 1370 1180ZM1230 1290L1270 1258 1305 1290 1300 1305 1240 1303ZM1380 1245L1400 1270 1448 1270 1445 1320 1415 1368 1385 1330ZM1262 1385L1298 1365 1290 1390 1268 1410ZM1295 1440L1328 1442 1325 1470 1310 1475ZM1482 1268L1510 1310 1490 1300Z" fill="#e9e9e9" />
    </g>
    <g transform={CENTRE} fill="#e8e8e8">
      <path d="M480 25H720L640 100 560 110 490 60ZM870 25H1470L1462 120 1400 225 1300 235 1200 200 1080 215 1040 190 960 60Z" />
      <path d="M1120 270L1200 255 1240 310 1340 290 1420 275 1400 310 1370 340 1290 345 1240 370 1190 330 1170 350ZM940 190L1010 260 960 250 900 180Z" fill="#ededed" />
      <path d="M228 990L265 965 340 895 350 935 325 1000 352 1160 290 1248 272 1190ZM355 1000L395 935 420 908 440 935 500 950 522 1000 495 1035 440 1015 430 1080 375 1108ZM890 1245L940 1215 945 1260 905 1285ZM1490 750H1545V790H1480Z" fill="#ececec" />
      <path d="M950 25L985 90 965 150M1190 25L1225 90M260 60L320 45 360 110 390 120M1320 30L1330 80M1390 60L1440 100" fill="none" stroke="#fbfbfb" strokeWidth="6" />
    </g>
    <g transform={EAST} fill="#e6e6e6">
      <path d="M190 25H1095L1150 130 1153 198 1125 182 1085 225 1075 300 1105 460 1105 505 1060 535 1025 558 992 555 992 510 940 520 905 580 880 612 850 600 800 660 650 640 560 640 530 580 440 530 380 515 400 470 460 400 465 350 500 300 430 280 350 190 265 125 240 105 200 80Z" />
      <path d="M-10 25H72L65 120 30 190-10 170ZM95 355L140 350 150 290 200 215 300 240 330 360 340 420 260 465 208 512Z" fill="#e9e9e9" />
      <path d="M20 1525L30 1410 60 1385 90 1358 130 1375 140 1410 215 1450 225 1490 180 1525ZM340 1525L295 1450 310 1375 400 1325 430 1350 510 1400 560 1470 590 1525ZM1230 1510L1320 1365 1370 1385 1450 1380 1490 1330V1525H1260Z" fill="#e9e9e9" />
      <g fill="none" stroke="#f6f6f6" strokeLinejoin="round">
        <path d="M435 340L495 300 550 335 560 280 590 262" strokeWidth="16" />
        <path d="M590 262L575 160 585 100 580 30M590 262L650 300 710 270 755 260M650 290V330M610 250L620 200 655 180M360 205L405 195 435 170M265 125L300 60 320 35 390 70" strokeWidth="7" />
        <path d="M150 455L190 390M1000 70L1060 120 1110 170M545 550V600L600 620M1060 480L1100 505M850 600L850 540 870 490M1060 260L1080 370" strokeWidth="3" />
      </g>
    </g>
    <g fill="none" stroke="#f4f4f4" strokeWidth="30" strokeLinejoin="round">
      <path transform={CENTRE} d={border} vectorEffect="non-scaling-stroke" />
      <path transform={EAST} d={borderEast} vectorEffect="non-scaling-stroke" />
    </g>
    <g fill="none" stroke="#969696" strokeWidth="4">
      <path transform={CENTRE} d={border} vectorEffect="non-scaling-stroke" />
      <path transform={EAST} d={borderEast} vectorEffect="non-scaling-stroke" />
      <path transform={CENTRE} d="M870 160L915 205M925 220L945 240M1000 895V920L1015 950" stroke="#555" strokeWidth="3" strokeDasharray="9 5" vectorEffect="non-scaling-stroke" />
    </g>
    <g fill="#868686" stroke="#fff" strokeWidth="4" paintOrder="stroke" textAnchor="middle" fontFamily='"Noto Sans", sans-serif' fontSize="28" fontWeight="400">
      {labels.map(([x, y, text]) => <text key={text + x} x={x} y={y}>{text}</text>)}
    </g>
    <g transform={CENTRE} stroke="#666361" strokeLinejoin="round">
      <path d={mainland} fill="#fcc1b8" fillOpacity=".86" vectorEffect="non-scaling-stroke" />
      <path d="M1213 572L1250 570 1268 548 1290 560 1307 620 1285 625 1245 660 1232 640 1228 600Z" fill="#f9a090" stroke="none" />
      <path d={zones} fill="none" strokeWidth="1.2" vectorEffect="non-scaling-stroke" />
      <path d="M1100 455L1125 448 1138 465 1118 488 1110 475 1098 472ZM858 822L870 820 872 850 860 850ZM892 852L902 850 902 865Z" fill="#f6f6f6" vectorEffect="non-scaling-stroke" />
    </g>
  </svg>
);

/* ---------- charts ---------- */

const HOURS = Array.from({ length: 19 }, (_, i) => i + 5);
const TICKS = [200, 100, 0];
const PANE = 197;

const origin = {
  color: '#4e79a7',
  scale: 0.85,
  rows: [
    { name: 'WEEKDAY', values: [6, 34, 44, 36, 25, 22, 25, 32, 36, 39, 46, 46, 53, 65, 55, 41, 36, 22, 11] },
    { name: 'WEEKENDS/HO..', values: [1, 6, 6, 8, 11, 13, 15, 15, 20, 20, 20, 20, 20, 20, 20, 18, 18, 13, 6] },
  ],
};

const destination = {
  color: '#a90000',
  scale: 0.93,
  rows: [
    { name: 'WEEKDAY', values: [1, 5, 10, 10, 10, 12, 12, 12, 12, 12, 12, 12, 18, 18, 12, 8, 5, 3, 1] },
    { name: 'WEEKENDS/HO..', values: [0, 1, 3, 5, 5, 8, 8, 8, 5, 5, 5, 5, 8, 5, 5, 3, 1, 1, 0] },
  ],
};

const Chart = ({ data }) => (
  <Plot>
    <ColumnHead>Time Per Hour</ColumnHead>
    <FieldName>Day Type</FieldName>
    {data.rows.map((row, i) => (
      <React.Fragment key={row.name}>
        <RowName $first={i === 0} style={{ gridRow: i + 2 }}>{row.name}</RowName>
        <Axis $first={i === 0} style={{ gridRow: i + 2 }}>
          {TICKS.map((t) => (
            <React.Fragment key={t}>
              <AxisLabel style={{ bottom: Math.min(PANE - 34, Math.max(2, Math.round(t * data.scale) - 16)) }}>{t}K</AxisLabel>
              {t > 0 && <AxisTick style={{ bottom: Math.round(t * data.scale) }} />}
            </React.Fragment>
          ))}
        </Axis>
        <Pane $first={i === 0} style={{ gridRow: i + 2 }}>
          <GridLine style={{ bottom: Math.round(100 * data.scale) }} />
          <GridLine style={{ bottom: Math.round(200 * data.scale) }} />
          {row.values.map((v, n) => (
            <Slot key={HOURS[n]}><Bar $color={data.color} style={{ height: Math.round(v * data.scale) }} /></Slot>
          ))}
        </Pane>
      </React.Fragment>
    ))}
    <Hours>{HOURS.map((h) => <Hour key={h}>{h}</Hour>)}</Hours>
  </Plot>
);

/* ---------- filters ---------- */

const areas = ['(All)', 'Null', 'ADMIRALTY', 'AIRPORT ROAD'];

const CheckFilter = ({ title, after }) => (
  <FilterBlock $after={after}>
    <FilterTitle>{title}</FilterTitle>
    <ListBox>
      <Options>
        {areas.map((a) => (
          <CheckLabel key={a} $gap={12} $size={25}><Check defaultChecked />{a}</CheckLabel>
        ))}
        <Check defaultChecked aria-label="Next area" />
      </Options>
      <ScrollTrack>
        <svg viewBox="0 0 14 18"><path d="M2 12l5-5 5 5" /></svg>
        <svg viewBox="0 0 14 18"><path d="M2 6l5 5 5-5" /></svg>
      </ScrollTrack>
    </ListBox>
  </FilterBlock>
);

const StepFilter = ({ title, value, max, at, ticks, after }) => {
  const [pos, setPos] = useState(at);
  return (
    <FilterBlock $after={after}>
      <FilterTitle>{title}</FilterTitle>
      <Control>
        <Stepper>
          <StepButton aria-label="Previous"><svg viewBox="0 0 16 20"><path d="M13 3L4 10l9 7" /></svg></StepButton>
          <Picker><select aria-label={title} defaultValue={value}><option>{value}</option></select></Picker>
          <StepButton aria-label="Next"><svg viewBox="0 0 16 20"><path d="M3 3l9 7-9 7" /></svg></StepButton>
        </Stepper>
        <Range aria-label={`${title} position`} min={0} max={max} value={pos} onChange={(e) => setPos(+e.target.value)} />
        <Ticks $on={ticks}>{Array.from({ length: 25 }, (_, i) => <i key={i} />)}</Ticks>
        <PlayRow>
          <PlayButton aria-label="Backward"><svg viewBox="0 0 28 28"><path d="M18 6v16L8 14z" /></svg></PlayButton>
          <PlayButton aria-label="Stop" $on><svg viewBox="0 0 28 28"><path d="M6 6h16v16H6z" /></svg></PlayButton>
          <PlayButton aria-label="Forward"><svg viewBox="0 0 28 28"><path d="M10 6v16l10-8z" /></svg></PlayButton>
          <PlayButton aria-label="Slow" $push><svg viewBox="0 0 28 28"><path d="M4 19h20v6H4z" /></svg></PlayButton>
          <PlayButton aria-label="Normal" $on><svg viewBox="0 0 28 28"><path d="M4 11h20v6H4zM4 19h20v6H4z" /></svg></PlayButton>
          <PlayButton aria-label="Fast"><svg viewBox="0 0 28 28"><path d="M4 3h20v6H4zM4 11h20v6H4zM4 19h20v6H4z" /></svg></PlayButton>
        </PlayRow>
        <CheckLabel $gap={11} $size={23}><Check />Show history</CheckLabel>
      </Control>
    </FilterBlock>
  );
};

const objects = ['Horizontal', 'Blank', 'Vertical', 'Navigation', 'Text', 'Download', 'Image', 'Extension', 'Web Page', 'Ask Data'];

export default function App() {
  return (
    <Page>
      <Global />
      <Toolbar>
        <ToolRow>
          <LogoBox><Logo /></LogoBox>
          <Divider />
          <ToolIcon name="back" w={64} />
          <ToolIcon name="forward" w={64} dim />
          <ToolIcon name="replay" w={56} />
          <CaretTool $w={26} aria-label="Replay options" />
          <ToolIcon name="save" w={60} />
          <ToolIcon name="data" w={68} />
          <ToolIcon name="pause" w={54} />
          <CaretTool $w={26} aria-label="Update options" />
          <ToolIcon name="refresh" w={54} dim />
          <CaretTool $w={26} $dim aria-label="Refresh options" />
          <Divider />
          <ToolIcon name="sheet" w={54} />
          <CaretTool $w={30} aria-label="New sheet options" />
          <ToolIcon name="dupe" w={56} />
          <ToolIcon name="clear" w={62} />
          <CaretTool $w={24} aria-label="Clear options" />
          <Divider />
          <ToolIcon name="swap" w={64} />
          <ToolIcon name="asc" w={64} />
          <ToolIcon name="desc" w={66} />
          <Divider />
          <ToolIcon name="pen" w={56} />
          <CaretTool $w={22} aria-label="Highlight options" />
          <ToolIcon name="clip" w={60} dim />
          <CaretTool $w={20} $dim aria-label="Group options" />
          <ToolIcon name="label" w={68} dim />
          <ToolIcon name="pin" w={58} />
          <FitBox><select aria-label="Fit" defaultValue="Entire View"><option>Entire View</option></select></FitBox>
          <Divider />
          <ToolIcon name="cards" w={56} />
          <CaretTool $w={22} aria-label="Card options" />
          <ToolIcon name="present" w={68} />
          <Divider />
          <ToolIcon name="share" w={64} />
          <ShowMe>
            <svg viewBox="0 0 32 40">
              <path d="M0 1h25v10H0z" fill="#8a6f99" /><path d="M0 13h32v6H0z" fill="#7fa3cb" />
              <path d="M0 21h13v6H0z" fill="#f2a57d" /><path d="M0 29h19v6H0z" fill="#f86b7d" />
            </svg>
            Show Me
          </ShowMe>
        </ToolRow>
      </Toolbar>

      <Body>
        <Side>
          <Tabs>
            <Tab>Dashboard</Tab>
            <Tab $off>
              Layout
              <svg width="12" height="20" viewBox="0 0 12 20" fill="none" stroke={ICON} strokeWidth="2"><path d="M11 1L2 10l9 9" /></svg>
            </Tab>
          </Tabs>
          <Section $top={24} $bottom={25}>
            <ul><Device $on>Default</Device><Device>Phone</Device></ul>
            <Preview>Device Preview</Preview>
          </Section>
          <Section $top={13} $bottom={41}>
            <Heading>Size</Heading>
            <SizeBox><select aria-label="Size" defaultValue="Automatic"><option>Automatic</option></select></SizeBox>
          </Section>
          <Section $grow>
            <Heading>Sheets</Heading>
            <SheetList>
              <Sheet><SheetIcon />Origin</Sheet>
              <Sheet $hover><SheetIcon />Destination</Sheet>
              <Sheet><SheetIcon />Choropleth Map</Sheet>
            </SheetList>
          </Section>
          <Section $last $top={11} $bottom={42}>
            <Heading>Objects</Heading>
            <ObjectGrid>
              {objects.map((o) => (
                <ObjectItem key={o}><svg viewBox="0 0 34 34">{objectArt[o]}</svg>{o}</ObjectItem>
              ))}
            </ObjectGrid>
            <Toggle><ToggleItem $on>Tiled</ToggleItem><ToggleItem>Floating</ToggleItem></Toggle>
            <CheckLabel $size={26} $gap={11}><Check />Show dashboard title</CheckLabel>
          </Section>
        </Side>

        <Canvas>
          <Views>
            <MapCard>
              <ViewTitle>Trips Generated from <em>All</em> at <em>10</em> O’clock</ViewTitle>
              <MapBox>
                <MapArt />
                <Credit>© 2022 Mapbox © OpenStreetMap</Credit>
                <Nulls>21 nulls</Nulls>
              </MapBox>
              <DropEdge />
            </MapCard>
            <ChartRow>
              <ChartCard>
                <ViewTitle>Trips Generated From <em>Null</em> at Different Time</ViewTitle>
                <Chart data={origin} />
              </ChartCard>
              <ChartCard $selected>
                <ViewTitle>Trips Attracted to <em>FARRER PARK</em> at Different Time</ViewTitle>
                <Chart data={destination} />
                <Lens><svg viewBox="0 0 60 60"><circle cx="27" cy="28" r="13" /><path d="M36 38l8 8" strokeWidth="7" /></svg></Lens>
                <Handle aria-label="Move" />
                <CardTools>
                  <button aria-label="Remove"><svg viewBox="0 0 28 28"><path d="M5 5l18 18M23 5L5 23" strokeWidth="3" /></svg></button>
                  <button aria-label="Go to sheet"><svg viewBox="0 0 28 28"><path d="M14 5H3v19h18V13M10 17L23 4" /><path d="M16 3h10v9z" fill="#fff" stroke="none" /></svg></button>
                  <button aria-label="Use as filter"><svg viewBox="0 0 28 28"><path d="M2 2h24L16 14v13h-4V14z" /></svg></button>
                  <button aria-label="More options"><svg viewBox="0 0 28 28"><path d="M8 11h12l-6 6z" fill="#fff" /></svg></button>
                </CardTools>
              </ChartCard>
            </ChartRow>
          </Views>

          <Filters>
            <CheckFilter title="Origin Sz" after={18} />
            <FilterBlock $after={21}>
              <FilterTitle>% of Total Total Trips</FilterTitle>
              <Ramp>
                {['#ffbeb2', '#fc9780', '#f66a57', '#dc3a47', '#ae1a3f'].map((c) => <Swatch key={c} $color={c} />)}
              </Ramp>
              <RampEnds><span>0.00%</span><span>17.31%</span></RampEnds>
            </FilterBlock>
            <StepFilter title="Time Per Hour" value="10" max={24} at={11} ticks after={22} />
            <StepFilter title="Origin Sz" value="Null" max={100} at={0} after={24} />
            <CheckFilter title="Destination Sz" after={16} />
            <StepFilter title="Destination Sz" value="FARRER PARK" max={100} at={24} after={0} />
          </Filters>
        </Canvas>
      </Body>

      <SheetTabs>
        <SheetTab $w={257} aria-label="Data Source" />
        <SheetTab $w={97} aria-label="Sheet 1" />
        <SheetTab $w={157} aria-label="Sheet 2" />
        <SheetTab $w={210} aria-label="Sheet 3" />
        <SheetTab $w={205} $on aria-label="Dashboard 1" />
        <SheetTab $w={63} aria-label="New worksheet" />
        <SheetTab $w={64} aria-label="New dashboard" />
        <SheetTab $w={64} aria-label="New story" />
      </SheetTabs>

      <Callouts viewBox="0 0 1440 800">
        <path d="M22 343h357v69H22z" stroke="#ff7f27" />
        <path d="M14 498h218v57H14z" stroke="#ffca18" />
        <path d="M13 592h280v64H13z" stroke="#00a8f3" />
        <path d="M16 551h246v52H16z" stroke="#ed1c24" />
        <path d="M239 523L499 778" stroke="#ffca18" />
        <path d="M316 631L552 428" stroke="#00a8f3" />
        <path d="M271 572L1424 760" stroke="#ed1c24" />
      </Callouts>
    </Page>
  );
}
